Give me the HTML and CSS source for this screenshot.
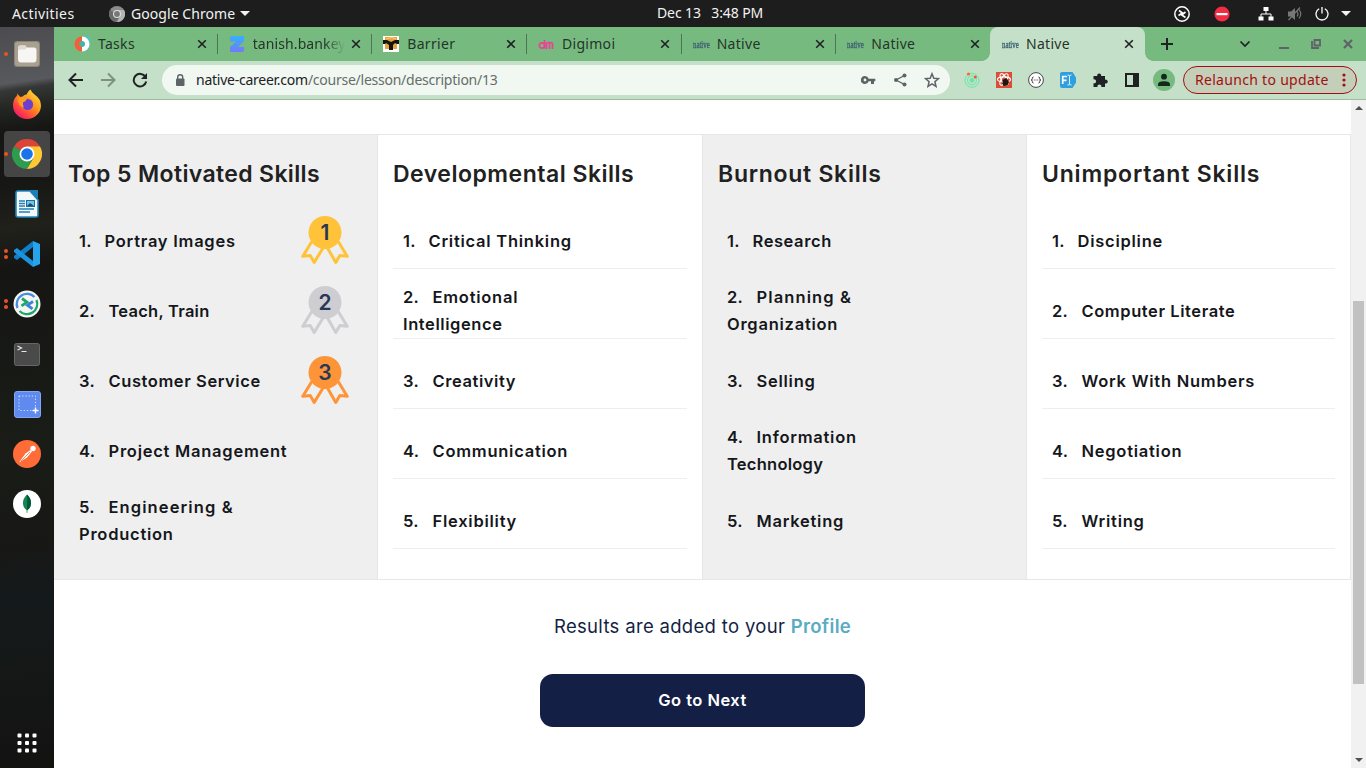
FILE: index.html
```html
<!DOCTYPE html>
<html lang="en">
<head>
<meta charset="utf-8">
<title>Native</title>
<link rel="stylesheet" href="styles.css">
</head>
<body>
<svg width="0" height="0" class="defs">
  <defs>
    <symbol id="x" viewBox="0 0 10 10"><path d="M1.200 1.200l7.600 7.600M8.800 1.200L1.200 8.800" stroke="currentColor" stroke-width="1.600" fill="none"/></symbol>
    <symbol id="medal" viewBox="0 0 48 48">
      <g fill="none" stroke="currentColor" stroke-width="3" stroke-linejoin="round" stroke-linecap="round">
        <path d="M10.500 26L1.800 40.300l7.400-.9 4 7L22 32"/>
        <path d="M37.500 26l8.700 14.300-7.400-.9-4 7L26.500 32"/>
      </g>
      <circle cx="24" cy="16.500" r="16.500" fill="currentColor"/>
    </symbol>
    <linearGradient id="zg" x1="0" y1="0" x2="0" y2="1"><stop offset="0" stop-color="#35b1fb"/><stop offset="1" stop-color="#7379fb"/></linearGradient>
    <linearGradient id="ff" x1="1" y1="0" x2=".2" y2="1"><stop offset="0" stop-color="#fff04a"/><stop offset=".45" stop-color="#ff9a1c"/><stop offset=".8" stop-color="#ff3b46"/><stop offset="1" stop-color="#e3157c"/></linearGradient>
  </defs>
</svg>
<header class="topbar">
  <span class="activities">Activities</span>
  <span class="app">
    <svg width="16" height="16" viewBox="0 0 16 16"><circle cx="8" cy="8" r="8" fill="#8c8c8c"/><path d="M8 8L1.200 4A8 8 0 0 0 7 16l4-6z" fill="#6a6a6a"/><path d="M8 4h7a8 8 0 0 1-7 12l3.500-6z" fill="#b4b4b4"/><circle cx="8" cy="8" r="4" fill="#ddd"/><circle cx="8" cy="8" r="2.900" fill="#777"/></svg>
    <span class="appname">Google Chrome</span><i class="caret"></i>
  </span>
  <span class="clock">Dec 13 &nbsp; 3:48 PM</span>
  <span class="tray">
    <svg class="t1" width="16" height="16" viewBox="0 0 16 16" fill="none" stroke="#fff"><circle cx="8" cy="8" r="7.200" stroke-width="1.500"/><path d="M5 4.500L8.500 7 4.500 9.500M11.500 6L7.700 9l3.800 2.500" stroke-width="1.600"/></svg>
    <svg class="t2" width="16" height="16" viewBox="0 0 16 16"><circle cx="8" cy="8" r="7.600" fill="#f22c42"/><path d="M2.500 7h11v2.200h-11z" fill="#fff"/></svg>
    <svg class="t3" width="16" height="16" viewBox="0 0 16 16" fill="#fff"><path d="M5.500 1h5v4h-5zM.5 10.500h5v4h-5zM10.500 10.500h5v4h-5z"/><path d="M8 5v3M3 11V8h10v3" fill="none" stroke="#fff"/></svg>
    <svg class="t4" width="16" height="16" viewBox="0 0 16 16" fill="#777"><path d="M1 5.500h3L8 2v12l-4-3.500H1z"/><path d="M10 5.500q2 2.500 0 5M12 3.500q3.500 4.500 0 9M1.500 14L13 1.500" fill="none" stroke="#777" stroke-width="1.200"/></svg>
    <svg class="t5" width="14" height="14" viewBox="0 0 14 14" fill="none" stroke="#fff" stroke-width="1.300"><path d="M4.200 1.700a6 6 0 1 0 5.600 0M7 0v6.500"/></svg>
    <i class="caret"></i>
  </span>
</header>
<div class="desktop">
  <nav class="dock">
    <div class="slot one"><svg width="26" height="26" viewBox="0 0 26 26"><rect width="26" height="26" rx="3" fill="#8c8474"/><rect x="1" y="1" width="24" height="24" rx="2.500" fill="#a9a18f"/><path d="M4 7q0-2.500 2-2.500h5q1 0 1.500 2H20q2.500 0 2.500 2.500v9q0 3.500-3 3.500H7q-3 0-3-3.500z" fill="#f7f6f4"/><path d="M4 10V7q0-2.500 2-2.500h5q1 0 1.500 2l-1 2H6q-2 0-2 1.500z" fill="#dfdbd4"/></svg></div>
    <div class="slot"><svg width="30" height="30" viewBox="0 0 30 30"><path d="M18.500.5q1 3 4 5 6.500 4.500 6.500 11a14 13.500 0 0 1-28 0q0-6 4-10 .5 2 1.500 2.500 2-1.500 4-1.500 2-2 4-2 2-4 4-5z" fill="url(#ff)"/><path d="M5 4.500l5 5 4-1q4 0 6 3 2 4-1 7-4 4-8.500 1Q8 16 5.500 12z" fill="#ff8a24"/><circle cx="15.500" cy="15.500" r="5.600" fill="#6b3fcf"/><path d="M7 9q4-1.500 8 .500-1 3-4 4-.5 3 1 5-4-.500-5.500-5z" fill="#ff9c20"/></svg></div>
    <div class="slot one active"><svg width="30" height="30" viewBox="0 0 30 30"><path d="M15 15L2 7.500a15 15 0 0 1 26 0z" fill="#db4437"/><path d="M15 15L2 7.500A15 15 0 0 0 15 30l6.500-11z" fill="#2f9b4e"/><path d="M15 7.500h13A15 15 0 0 1 15 30l6.500-11z" fill="#fcc934"/><circle cx="15" cy="15" r="7.500" fill="#fff"/><circle cx="15" cy="15" r="5.800" fill="#1a73e8"/></svg></div>
    <div class="slot"><svg width="24" height="28" viewBox="0 0 24 28"><path d="M3 1h12l8 9v15q0 2-2 2H3q-2 0-2-2V3q0-2 2-2z" fill="#f3f8fb" stroke="#2489bd" stroke-width="1.600"/><path d="M14 0h9v9z" fill="#1f7fb5"/><path d="M4 11h6M4 13.500h6M4 16h6M4 19h15M4 22h11" stroke="#2380b4" stroke-width="1.300"/><rect x="11.500" y="10.500" width="8" height="6" fill="#75c1e8" stroke="#1c6d9c"/><path d="M12 16l3-3 4 3z" fill="#174f73"/></svg></div>
    <div class="slot two"><svg width="28" height="28" viewBox="0 0 28 28"><path d="M20 1l7 3v20l-7 3z" fill="#27a5ec"/><path d="M20 1v6L4 20l-3-2v-2z" fill="#0f7fcb"/><path d="M20 27v-6L4 8 1 10v2z" fill="#1b93dd"/></svg></div>
    <div class="slot two"><svg width="28" height="28" viewBox="0 0 28 28"><circle cx="14" cy="14" r="13.500" fill="#f5f5f2"/><path d="M4.500 18A10.300 10.300 0 0 1 21.500 7" fill="none" stroke="#4a8de0" stroke-width="2.300"/><path d="M23.500 10A10.300 10.300 0 0 1 6.500 21" fill="none" stroke="#1ca66a" stroke-width="2.300"/><path d="M9 8.500l5 3.700-5.500 3.600" fill="none" stroke="#1ca66a" stroke-width="2.800"/><path d="M20 11.500l-5.500 3.700 5 3.700" fill="none" stroke="#3c82da" stroke-width="2.800"/></svg></div>
    <div class="slot"><svg width="26" height="23" viewBox="0 0 26 23"><rect x=".5" y=".5" width="25" height="22" rx="2" fill="#4a4a4a" stroke="#666"/><path d="M3.500 3l4 2-4 2M7.500 8.500h5" fill="none" stroke="#e8e8e8" stroke-width="1.200"/></svg></div>
    <div class="slot"><svg width="27" height="27" viewBox="0 0 27 27"><rect x=".5" y=".5" width="26" height="26" rx="2.500" fill="#5f8af0" stroke="#86a6f2"/><rect x="5" y="5" width="16.500" height="14.500" fill="none" stroke="#dbe5ff" stroke-dasharray="1.200 2"/><path d="M21.500 16.500v6M18.500 19.500h6" stroke="#fff" stroke-width="1.500"/></svg></div>
    <div class="slot"><svg width="28" height="28" viewBox="0 0 28 28"><circle cx="14" cy="14" r="14" fill="#ff6c37"/><path d="M6 22.500l6.500-9 5-3.500 1.500 1.500-5 6z" fill="#fff"/><circle cx="20" cy="8.500" r="2.700" fill="#fff"/><path d="M8 21l9-9" stroke="#ff8a60"/></svg></div>
    <div class="slot"><svg width="28" height="28" viewBox="0 0 28 28"><circle cx="14" cy="14" r="14" fill="#fff"/><path d="M14 4.500q4.200 4 4 9-.2 4-3.500 6.500l-.2 3h-.6l-.2-3Q10.200 17.500 10 13.500q-.2-5 4-9z" fill="#10884f"/><path d="M14 4.500q4.200 4 4 9-.2 4-3.500 6.500H14z" fill="#00593b"/></svg></div>
    <div class="slot apps"><svg width="20" height="20" viewBox="0 0 20 20" fill="#fff"><rect x=".5" y=".5" width="4" height="4" rx="1"/><rect x="8" y=".5" width="4" height="4" rx="1"/><rect x="15.500" y=".5" width="4" height="4" rx="1"/><rect x=".5" y="8" width="4" height="4" rx="1"/><rect x="8" y="8" width="4" height="4" rx="1"/><rect x="15.500" y="8" width="4" height="4" rx="1"/><rect x=".5" y="15.500" width="4" height="4" rx="1"/><rect x="8" y="15.500" width="4" height="4" rx="1"/><rect x="15.500" y="15.500" width="4" height="4" rx="1"/></svg></div>
  </nav>
  <div class="browser">
    <div class="tabs">
      <div class="tab"><svg width="16" height="16" viewBox="0 0 16 16"><path d="M10 0h6v11l-5 5H8z" fill="#52c5b8"/><path d="M8 .5a7.500 7.500 0 0 0 0 15z" fill="#fa5c38"/><path d="M8 .5a7.500 7.500 0 0 1 0 15z" fill="#fff"/><circle cx="8" cy="8" r="3" fill="#45b3a5"/></svg><span class="title">Tasks</span><svg class="close"><use href="#x"/></svg></div>
      <div class="tab"><svg width="16" height="16" viewBox="0 0 16 16"><path d="M3 0h12v5l-6 6h6v3q0 2-2 2H1v-5l6-5.500H1V2q0-2 2-2z" fill="url(#zg)"/></svg><span class="title fade">tanish.bankey</span><svg class="close"><use href="#x"/></svg></div>
      <div class="tab"><svg width="16" height="16" viewBox="0 0 16 16"><path fill="#fff" d="M0 0h16v16H0z"/><path d="M2 1h12v12H2z" fill="#e6a53e"/><path d="M3 3q5-3 10 0" stroke="#f8cf78" fill="none"/><path d="M0 4h4l4 2 4-2h4v4h-2l-2-1-2 2v5H6V9L3 7 2 8H0z" fill="#16130f"/></svg><span class="title">Barrier</span><svg class="close"><use href="#x"/></svg></div>
      <div class="tab"><svg width="16" height="16" viewBox="0 0 16 16" fill="none" stroke="#e84393" stroke-width="1.700"><circle cx="4" cy="9.500" r="2.700"/><path d="M6.500 4v8.500M8.500 13V7q2.500-1 3 0v6M11.500 7q3-1 3 1v5"/></svg><span class="title">Digimoi</span><svg class="close"><use href="#x"/></svg></div>
      <div class="tab"><span class="native"><b>native</b></span><span class="title">Native</span><svg class="close"><use href="#x"/></svg></div>
      <div class="tab last"><span class="native"><b>native</b></span><span class="title">Native</span><svg class="close"><use href="#x"/></svg></div>
      <div class="tab current"><span class="native"><b>native</b></span><span class="title">Native</span><svg class="close"><use href="#x"/></svg></div>
      <svg class="plus" width="12" height="12" viewBox="0 0 12 12"><path d="M6 0v12M0 6h12" stroke="#202124" stroke-width="2"/></svg>
      <div class="winctl">
        <svg width="12" height="10" viewBox="0 0 12 10"><path d="M1.500 2.500L6 7l4.500-4.500" fill="none" stroke="#202124" stroke-width="1.700"/></svg>
        <svg width="10" height="10" viewBox="0 0 10 10"><path d="M0 9h10" stroke="#5f6368" stroke-width="2"/></svg>
        <svg width="10" height="10" viewBox="0 0 10 10" fill="none" stroke="#5f6368" stroke-width="1.800"><path d="M3.500 1h5.500v5.500H3.500zM1 2v7h7"/></svg>
        <svg width="10" height="10" viewBox="0 0 10 10"><path d="M1 1l8 8M9 1L1 9" stroke="#5f6368" stroke-width="2.200"/></svg>
      </div>
    </div>
    <div class="toolbar">
      <div class="navs">
        <svg width="16" height="16" viewBox="0 0 16 16" fill="none" stroke="#202124" stroke-width="2"><path d="M15 8H2M8 1.500L1.500 8 8 14.500"/></svg>
        <svg width="16" height="16" viewBox="0 0 16 16" fill="none" stroke="#7d9081" stroke-width="2"><path d="M1 8h13M8 1.500L14.500 8 8 14.500"/></svg>
        <svg width="16" height="16" viewBox="0 0 16 16" fill="none" stroke="#202124" stroke-width="2"><path d="M13.500 5A6.300 6.300 0 1 0 14.200 9.500"/><path d="M15 1v6H9z" fill="#202124" stroke="none"/></svg>
      </div>
      <div class="omnibox">
        <svg width="10" height="13" viewBox="0 0 10 13"><rect x="1" y="4.500" width="8.500" height="7.500" rx="1" fill="#5f6368"/><path d="M2.700 5V3.200a2.500 2.500 0 0 1 5 0V5" fill="none" stroke="#5f6368" stroke-width="1.400"/></svg>
        <span class="url"><b>native-career.com</b>/course/lesson/description/13</span>
        <svg class="ic" viewBox="0 0 16 16"><path fill-rule="evenodd" d="M5 4a4 4 0 1 0 3.700 5.300H11V12h3V9.300h1.300V6.700H8.700A4 4 0 0 0 5 4zm0 2.600a1.400 1.400 0 1 1 0 2.800 1.400 1.400 0 0 1 0-2.800z" fill="#5f6368"/></svg>
        <svg class="ic" viewBox="0 0 16 16" fill="#5f6368"><circle cx="4" cy="8" r="2"/><circle cx="12.500" cy="3.500" r="2"/><circle cx="12.500" cy="12.500" r="2"/><path d="M12.500 3.500L4 8l8.500 4.500" fill="none" stroke="#5f6368" stroke-width="1.400"/></svg>
        <svg class="ic" viewBox="0 0 16 16"><path d="M8 1.800l1.800 4.400 4.700.4-3.600 3.100 1.100 4.600L8 11.800l-4 2.500 1.100-4.600-3.600-3.100 4.700-.4z" fill="none" stroke="#5f6368" stroke-width="1.500"/></svg>
      </div>
      <div class="exts">
        <svg viewBox="0 0 16 16" fill="none" stroke="#62eaa9"><circle cx="8" cy="8.300" r="7"/><circle cx="8" cy="8.300" r="4.500"/><circle cx="8" cy="8.300" r="2" fill="#62eaa9"/><circle cx="4.500" cy="2" r="1.600" fill="#f66b3b" stroke="none"/><circle cx="11.300" cy="5" r="1.600" fill="#f6523b" stroke="none"/></svg>
        <svg viewBox="0 0 16 16"><path d="M0 0h16v16H0z" fill="#dd4b39"/><g fill="none" stroke="#fff" stroke-width="1.100"><ellipse cx="8" cy="7.500" rx="6.500" ry="2.600"/><ellipse cx="8" cy="7.500" rx="6.500" ry="2.600" transform="rotate(60 8 7.500)"/><ellipse cx="8" cy="7.500" rx="6.500" ry="2.600" transform="rotate(120 8 7.500)"/></g><path d="M6.500 8l4-2 2.500 4-1.500 3.500-4 .5-1-2.500z" fill="#24140f"/></svg>
        <svg viewBox="0 0 16 16"><circle cx="8" cy="8" r="7.400" fill="#fff" stroke="#444"/><path d="M5.500 5q-1.300 0-1.200 1.500T3.200 8q1.200 0 1.100 1.500T5.500 11M10.500 5q1.300 0 1.200 1.500T12.800 8q-1.200 0-1.100 1.500T10.500 11" fill="none" stroke="#333"/><path d="M5.800 8h4.400" stroke="#555" stroke-dasharray="1 .7"/></svg>
        <svg viewBox="0 0 16 16"><path d="M2 0h10.500L16 5.500v5L12.500 16H2q-2 0-2-2V2q0-2 2-2z" fill="#2f9fe0"/><path d="M2.700 12V4.500h4.300M2.700 8.300h3.800" fill="none" stroke="#fff" stroke-width="1.700"/><path d="M7.500 3q2 0 2 1v8q0 1-2 1M11.500 3q-2 0-2 1v8q0 1 2 1" fill="none" stroke="#d7f1ff"/></svg>
        <svg viewBox="0 0 16 16"><path d="M1.500 4h3.800a2 2 0 1 1 3.800 0H13v3.700a2 2 0 1 1 0 3.700V15H9.300a2 2 0 1 0-3.800 0h-4v-3.800a2 2 0 1 0 0-3.800z" fill="#202124"/></svg>
        <svg viewBox="0 0 16 16"><path fill-rule="evenodd" d="M1 1h14v14H1zm2 2v10h6V3z" fill="#202124"/></svg>
        <span class="avatar"><svg viewBox="0 0 16 16" fill="#13271a"><circle cx="8" cy="4.700" r="2.900"/><path d="M2 14v-1.500Q2 9.300 8 9.300t6 3.200V14z"/></svg></span>
      </div>
      <div class="relaunch"><span>Relaunch to update</span><svg width="4" height="14" viewBox="0 0 4 14" fill="#a50e0e"><circle cx="2" cy="2" r="1.600"/><circle cx="2" cy="7" r="1.600"/><circle cx="2" cy="12" r="1.600"/></svg></div>
    </div>
    <div class="viewport">
      <main class="page">
        <section class="skills">
          <div class="col shade">
            <h2 class="h-a">Top 5 Motivated Skills</h2>
            <ol>
              <li><p><i class="n1">1.</i>Portray Images</p><span class="medal gold"><svg><use href="#medal"/></svg><b>1</b></span></li>
              <li><p class="tight"><i>2.</i>Teach, Train</p><span class="medal silver"><svg><use href="#medal"/></svg><b>2</b></span></li>
              <li><p class="snug"><i>3.</i>Customer Service</p><span class="medal bronze"><svg><use href="#medal"/></svg><b>3</b></span></li>
              <li><p><i>4.</i>Project Management</p></li>
              <li><p class="double"><i>5.</i><span class="wide">Engineering &amp;</span><br>Production</p></li>
            </ol>
          </div>
          <div class="col">
            <h2 class="h-b">Developmental Skills</h2>
            <ol>
              <li><p><i class="n1">1.</i>Critical Thinking</p></li>
              <li><p class="double"><i>2.</i>Emotional<br><span class="snug">Intelligence</span></p></li>
              <li><p class="snug"><i>3.</i>Creativity</p></li>
              <li><p><i>4.</i>Communication</p></li>
              <li><p><i>5.</i>Flexibility</p></li>
            </ol>
          </div>
          <div class="col shade third">
            <h2 class="h-c">Burnout Skills</h2>
            <ol>
              <li><p class="snug"><i class="n1">1.</i>Research</p></li>
              <li><p class="double wide"><i>2.</i>Planning &amp;<br><span class="base">Organization</span></p></li>
              <li><p><i>3.</i>Selling</p></li>
              <li><p class="double"><i>4.</i>Information<br><span class="tight">Technology</span></p></li>
              <li><p><i>5.</i>Marketing</p></li>
            </ol>
          </div>
          <div class="col">
            <h2 class="h-d">Unimportant Skills</h2>
            <ol>
              <li><p><i class="n1">1.</i>Discipline</p></li>
              <li><p class="snug"><i>2.</i>Computer Literate</p></li>
              <li><p><i>3.</i>Work With Numbers</p></li>
              <li><p><i>4.</i>Negotiation</p></li>
              <li><p><i>5.</i>Writing</p></li>
            </ol>
          </div>
        </section>
        <p class="results">Results are added to your <a>Profile</a></p>
        <button class="next">Go to Next</button>
      </main>
      <div class="scrollbar"><i class="up"></i><div class="thumb"></div><i class="down"></i></div>
    </div>
  </div>
</div>
</body>
</html>
```
FILE: styles.css
```css
* { box-sizing: border-box; }
body { margin: 0; width: 1366px; height: 768px; overflow: hidden; font-family: "Noto Sans", "Open Sans", sans-serif; font-size: 14px; background: #fff; }
.defs { position: absolute; }
svg { display: block; flex: none; }
i { font-style: normal; }

.topbar { height: 27px; background: #1d1d1d; color: #f2f2f2; display: grid; grid-template-columns: 109px 548px 1fr auto; align-items: center; line-height: 27px; }
.activities { padding-left: 12px; letter-spacing: .42px; }
.app { display: flex; align-items: center; }
.appname { margin-left: 6px; letter-spacing: .06px; }
.caret { border: 5px solid transparent; border-top-color: #f2f2f2; border-bottom: 0; margin-left: 5px; }
.clock { letter-spacing: -.12px; white-space: nowrap; line-height: 25px; padding-bottom: 2px; }
.tray { display: flex; align-items: center; padding-right: 15px; }
.t1 { margin-right: 24px; }
.t2 { margin-right: 28px; }
.t3 { margin-right: 13px; }
.t4 { margin-right: 12px; }
.t5 { margin-right: 7px; }

.desktop { display: flex; height: 741px; }
.dock { width: 54px; flex: none; display: flex; flex-direction: column; align-items: center; padding-top: 4px;
  background: linear-gradient(172deg, #4c4c50 0, #58595d 57px, #343735 64px, #242722 80px, #161615 105px, #171815 160px, #20211a 200px, #151614 240px, #1a1c17 420px, #171816 520px, #14191b 570px, #151817 640px, #121211 741px); }
.slot { width: 46px; height: 46px; margin-bottom: 4px; border-radius: 4px; display: flex; align-items: center; justify-content: center; position: relative; flex: none; }
.slot.active { background: #454545; }
.slot.one::before, .slot.two::before, .slot.two::after { content: ""; position: absolute; left: 0; top: 21px; width: 4px; height: 4px; border-radius: 50%; background: #e95420; }
.slot.two::before { top: 18px; }
.slot.two::after { top: 24px; }
.slot.apps { margin-top: auto; margin-bottom: 2px; }

.browser { flex: 1; display: flex; flex-direction: column; min-width: 0; }
.tabs { height: 34px; background: #77ba80; display: flex; align-items: center; padding-left: 8px; color: #2a3a2d; }
.tab { width: 154.670px; height: 34px; flex: none; display: flex; align-items: center; padding-left: 12px; position: relative; }
.tab:not(.last):not(.current)::after { content: ""; position: absolute; right: -1px; top: 7px; width: 1px; height: 20px; background: #4c7551; }
.title { margin-left: 8px; width: 90.500px; white-space: nowrap; line-height: 20px; color: #26342a; letter-spacing: .3px; }
.fade { width: 96px; margin-right: -5.500px; letter-spacing: .1px; -webkit-mask-image: linear-gradient(90deg, #000 74%, transparent 96%); mask-image: linear-gradient(90deg, #000 74%, transparent 96%); }
.close { width: 10px; height: 10px; margin-left: 8px; color: #202124; }
.native { width: 16px; height: 16px; }
.native b { display: block; width: 26px; font: 11px/16px "Liberation Serif", serif; color: #3d6272; transform: scaleX(.62); transform-origin: 0 0; -webkit-text-stroke: .4px #3d6272; }
.tab.current { background: #c5e0c8; border-radius: 8px 8px 0 0; }
.tab.current::before, .tab.current::after { content: ""; position: absolute; bottom: 0; width: 8px; height: 8px; }
.tab.current::before { left: -8px; background: radial-gradient(circle at 0 0, transparent 7.500px, #c5e0c8 8px); }
.tab.current::after { right: -8px; background: radial-gradient(circle at 100% 0, transparent 7.500px, #c5e0c8 8px); }
.plus { margin-left: 16px; }
.winctl { margin-left: auto; padding-right: 13px; display: flex; align-items: center; }
.winctl svg { margin-left: 22px; }
.winctl svg:nth-child(2) { margin-left: 28px; }

.toolbar { height: 39px; background: #c5e0c8; border-bottom: 1px solid #a1b9a5; display: flex; align-items: center; padding-left: 14px; }
.navs { display: flex; gap: 16px; }
.omnibox { width: 788px; height: 30px; border-radius: 15px; background: #f1f7f1; margin-left: 14px; padding: 0 2px 0 13px; display: flex; align-items: center; }
.url { flex: 1; margin-left: 11px; padding-bottom: 2px; color: #686d6a; letter-spacing: -.25px; }
.url b { font-weight: 400; color: #202124; }
.ic { width: 16px; height: 16px; margin: 0 8px; }
.exts { display: flex; align-items: center; padding-left: 6px; }
.exts > svg { width: 16px; height: 16px; margin: 0 8px; }
.avatar { width: 22px; height: 22px; border-radius: 50%; background: #77ba80; margin: 0 5px; display: flex; align-items: center; justify-content: center; }
.avatar svg { width: 16px; height: 16px; }
.relaunch { width: 174px; height: 28px; border: 1px solid #a50e0e; border-radius: 14px; background: #c3cfb9; color: #a50e0e; display: flex; align-items: center; justify-content: space-between; padding: 0 10px 0 11px; margin-left: 3px; white-space: nowrap; letter-spacing: .3px; }
.relaunch span { padding-bottom: 2px; }

.viewport { flex: 1; display: flex; min-height: 0; }
.page { width: 1297px; font-family: Inter, sans-serif; padding-top: 34px; display: flex; flex-direction: column; align-items: center; background: #fff; }
.skills { align-self: stretch; height: 446px; border: 1px solid #e7e7e7; border-left: 0; display: grid; grid-template-columns: 323px 325px 324px 1fr; }
.col { padding: 14px 15px 0; border-left: 1px solid #e7e7e7; }
.col:first-child { border-left-color: #efefef; padding-left: 13px; }
.col:first-child li { padding: 14px 13px 0 11px; }
.col.shade { background: #efefef; }
h2 { margin: 0; height: 50px; line-height: 50px; font-size: 23px; font-weight: 600; color: #212121; white-space: nowrap; }
.h-a { letter-spacing: .36px; }
.h-b { letter-spacing: .5px; }
.h-c { letter-spacing: .72px; }
.h-d { letter-spacing: .8px; }
ol { list-style: none; margin: 0; padding: 0; }
li { height: 70px; padding: 14px 14px 0 10px; border-bottom: 1px solid #eee; display: flex; align-items: center; justify-content: space-between; }
.third li { padding-left: 9px; }
.shade li { border-color: transparent; }
li p { margin: 0; padding-top: 2px; font-size: 16.500px; font-weight: 600; line-height: 27px; color: #15171b; letter-spacing: .75px; white-space: nowrap; }
li p.double { padding-top: 0; }
.tight { letter-spacing: .25px; }
.snug { letter-spacing: .58px; }
.base { letter-spacing: .75px; }
.wide { letter-spacing: 1.100px; }
li p i { display: inline-block; width: 29.500px; letter-spacing: .3px; }
li p .n1 { width: 25.500px; }
.medal { position: relative; width: 48px; height: 48px; margin-bottom: 2px; }
.medal svg { width: 48px; height: 48px; }
.medal b { position: absolute; left: 0; top: 0; width: 48px; text-align: center; font-size: 21px; font-weight: 600; line-height: 33px; color: #273756; }
.gold { color: #ffc239; }
.silver { color: #cdcdd2; }
.bronze { color: #fd9538; }
.results { margin: 31px 0 0; font-size: 18.500px; line-height: 30px; color: #141f45; letter-spacing: .32px; }
.results a { color: #59acc1; font-weight: 600; }
.next { margin-top: 33px; width: 325px; height: 53px; padding: 0 0 2px; border: 0; border-radius: 13px; background: #141f45; color: #fff; font: 600 16.500px Inter, sans-serif; letter-spacing: .45px; }
.scrollbar { width: 15px; background: #f1f1f1; display: flex; flex-direction: column; align-items: center; padding: 6px 0; }
.thumb { width: 11px; height: 383px; background: #c1c1c1; margin-top: 191px; }
.up, .down { border: 4px solid transparent; }
.up { border-bottom-color: #505050; border-top: 0; }
.down { border-top-color: #505050; border-bottom: 0; margin-top: auto; }
```
